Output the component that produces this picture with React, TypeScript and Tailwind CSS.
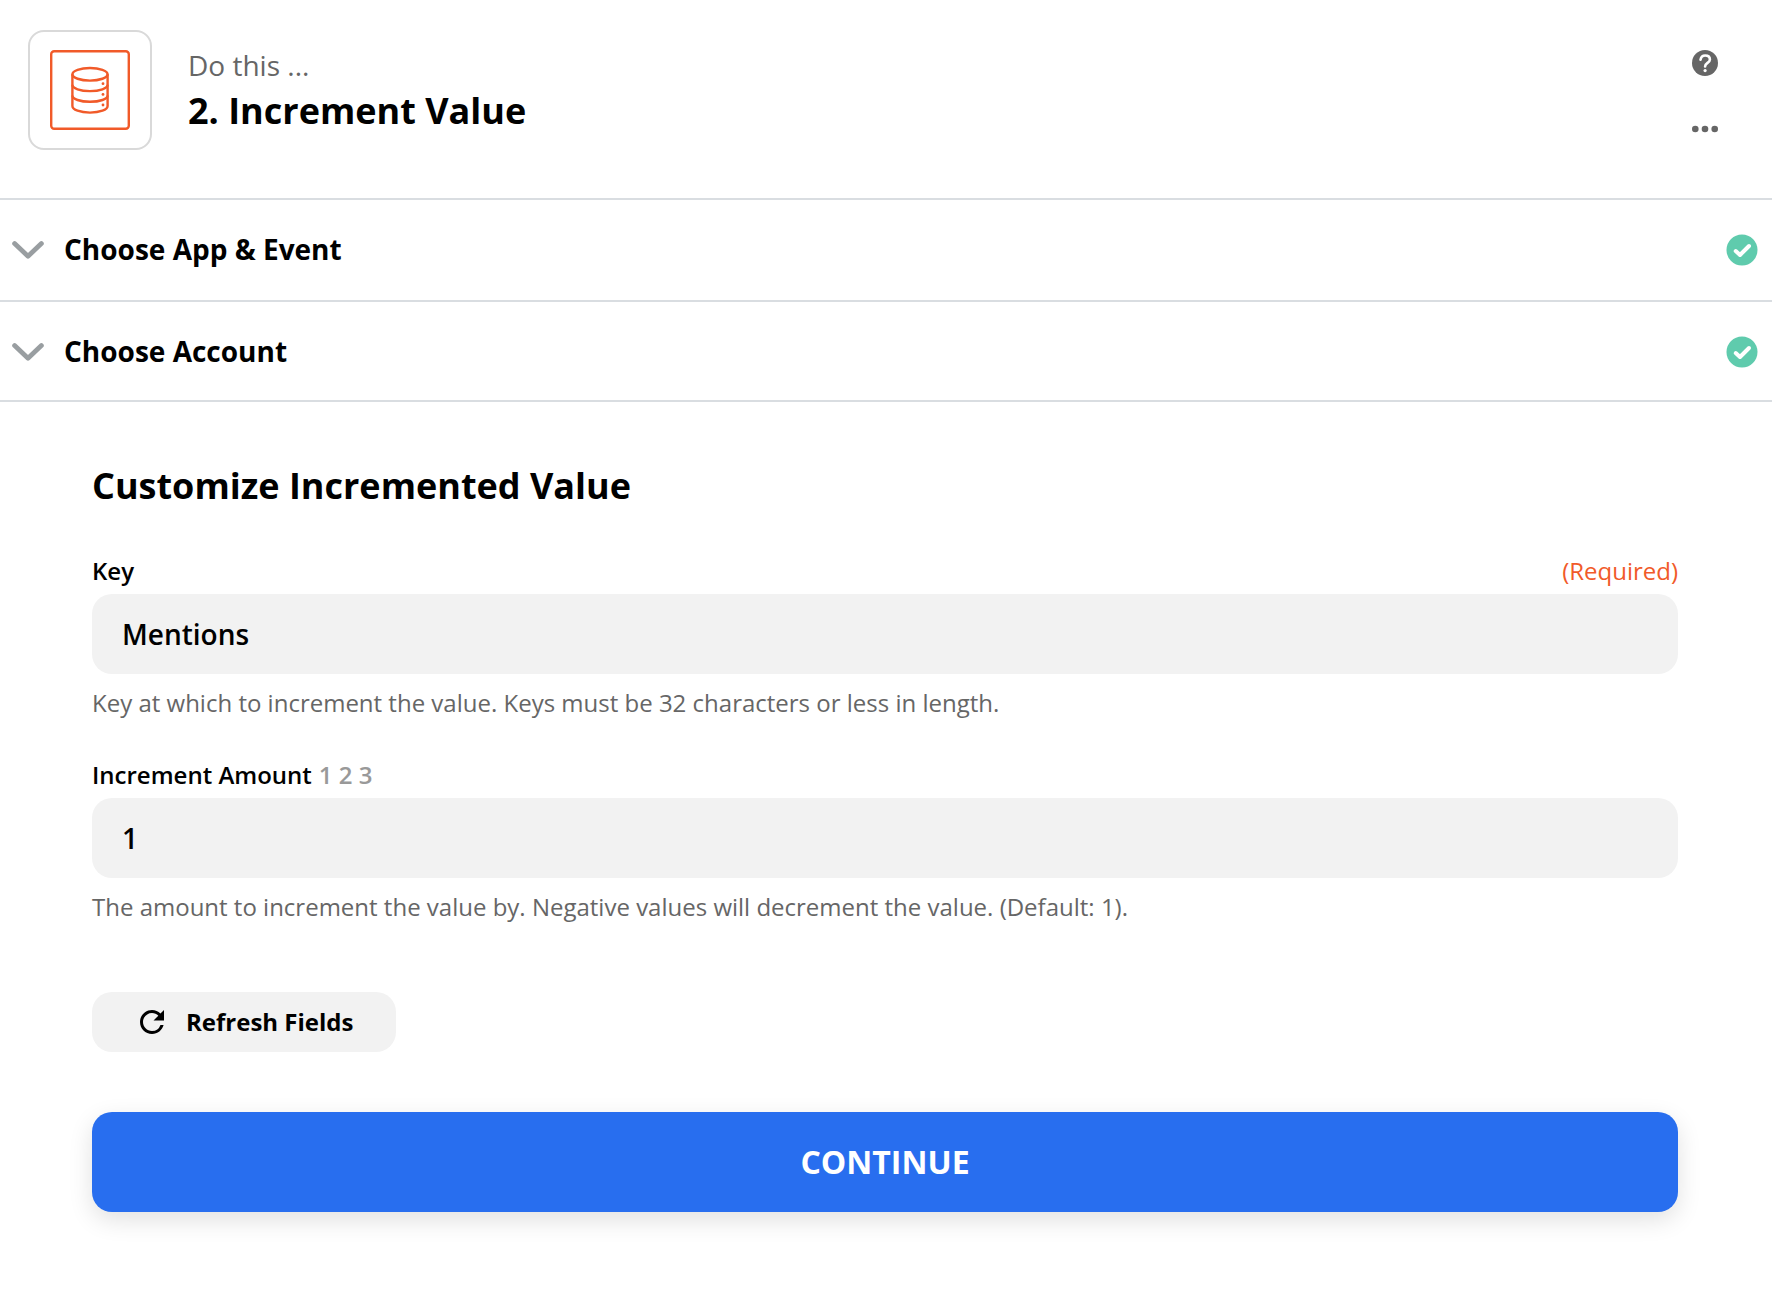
import React from "react";

const steps = [
  { id: 1, title: "Choose App & Event" },
  { id: 2, title: "Choose Account" },
];

const fields = [
  {
    id: "key",
    label: "Key",
    hint: "",
    required: true,
    value: "Mentions",
    help: "Key at which to increment the value. Keys must be 32 characters or less in length.",
  },
  {
    id: "amount",
    label: "Increment Amount",
    hint: "1 2 3",
    required: false,
    value: "1",
    help: "The amount to increment the value by. Negative values will decrement the value. (Default: 1).",
  },
];

function StorageIcon() {
  return (
    <svg width="80" height="80" viewBox="0 0 80 80" fill="none" stroke="#f15a29" strokeWidth="2.4">
      <rect x="1.2" y="1.2" width="77.6" height="77.6" rx="3" />
      <ellipse cx="40" cy="24.3" rx="17.6" ry="6.3" />
      <path d="M22.4 24.3v31.7c0 3.8 7.8 6.6 17.6 6.600s17.600-2.800 17.600-6.600v-31.700" />
      <path d="M22.400 34.800c0 3.600 7.800 6.300 17.600 6.300s17.600-2.700 17.600-6.300" />
      <path d="M22.400 45.500c0 3.600 7.800 6.300 17.600 6.300s17.600-2.700 17.600-6.300" />
      <g fill="#f15a29" stroke="none">
        <circle cx="53" cy="33.700" r="1.400" />
        <circle cx="53" cy="44.400" r="1.400" />
        <circle cx="53" cy="55" r="1.400" />
      </g>
    </svg>
  );
}

function HelpIcon() {
  return (
    <svg width="26" height="26" viewBox="0 0 26 26" fill="none">
      <circle cx="13" cy="13" r="13" fill="#666" />
      <path
        d="M8.500 9.800C9 7 10.800 5.500 13.200 5.500c2.800 0 4.700 1.600 4.700 3.900 0 3.500-4.800 3.400-4.800 7"
        stroke="#fff"
        strokeWidth="2.600"
        strokeLinecap="round"
      />
      <circle cx="13.100" cy="20.600" r="1.600" fill="#fff" />
    </svg>
  );
}

function DotsIcon() {
  return (
    <svg width="26" height="8" viewBox="0 0 26 8" fill="#666">
      <circle cx="3.300" cy="4" r="3.300" />
      <circle cx="13" cy="4" r="3.300" />
      <circle cx="22.700" cy="4" r="3.300" />
    </svg>
  );
}

function ChevronIcon() {
  return (
    <svg width="32" height="20" viewBox="0 0 32 20" fill="none">
      <path
        d="M2.600 3.600L16 16.200L29.400 3.600"
        stroke="#999ea1"
        strokeWidth="4.800"
        strokeLinecap="round"
        strokeLinejoin="round"
      />
    </svg>
  );
}

function CheckIcon() {
  return (
    <svg width="32" height="32" viewBox="0 0 32 32" fill="none">
      <circle cx="16" cy="16" r="15.500" fill="#5fcbad" />
      <path
        d="M9.700 17L14 21L23 12"
        stroke="#fff"
        strokeWidth="4"
        strokeLinecap="round"
        strokeLinejoin="round"
      />
    </svg>
  );
}

function RefreshIcon() {
  return (
    <svg width="36" height="36" viewBox="0 0 24 24">
      <path d="M17.65 6.35A7.958 7.958 0 0 0 12 4c-4.420 0-7.990 3.580-7.990 8s3.570 8 7.990 8c3.730 0 6.840-2.550 7.730-6h-2.080A5.990 5.990 0 0 1 12 18c-3.310 0-6-2.690-6-6s2.690-6 6-6c1.660 0 3.140.690 4.220 1.780L13 11h7V4l-2.350 2.350z" />
    </svg>
  );
}

function App() {
  return (
    <div className="bg-white text-black font-['Open_Sans',sans-serif]">
      <header className="flex items-start border-b-2 border-[#d9dde1] pt-[30px] pb-12 pl-7 pr-[54px]">
        <div className="rounded-[16px] border-2 border-[#d9d9d9] px-5 py-[18px]">
          <StorageIcon />
        </div>
        <div className="ml-9 mt-4 flex-1">
          <p className="text-[28px] leading-[38px] text-[#666]">Do this ...</p>
          <h1 className="mt-0.5 text-[36px] leading-[50px] font-bold">
            2. Increment Value
          </h1>
        </div>
        <div className="mt-5 flex flex-col gap-[49px]">
          <button type="button" aria-label="Help">
            <HelpIcon />
          </button>
          <button type="button" aria-label="More options">
            <DotsIcon />
          </button>
        </div>
      </header>

      {steps.map((step) => (
        <button
          key={step.id}
          type="button"
          className="flex w-full items-center gap-5 border-b-2 border-[#d9dde1] pt-[30px] pb-[30px] pl-3 pr-[14px] text-left last-of-type:pb-7"
        >
          <ChevronIcon />
          <span className="flex-1 pb-0.5 text-[28px] leading-[38px] font-bold">
            {step.title}
          </span>
          <CheckIcon />
        </button>
      ))}

      <main className="pt-[60px] pb-20 pl-[92px] pr-[94px]">
        <h2 className="mb-[45px] text-[36px] leading-[48px] font-bold">
          Customize Incremented Value
        </h2>

        <form>
          <div className="flex flex-col gap-10">
            {fields.map((field) => (
              <div key={field.id}>
                <div className="mb-[7px] flex justify-between text-[24px] leading-8">
                  <label htmlFor={field.id} className="font-semibold">
                    {field.label}
                    {field.hint && (
                      <span className="ml-[7px] text-[#999]">{field.hint}</span>
                    )}
                  </label>
                  {field.required && (
                    <span className="text-[#f15a29]">(Required)</span>
                  )}
                </div>
                <input
                  id={field.id}
                  type="text"
                  defaultValue={field.value}
                  className="block h-20 w-full rounded-[20px] bg-[#f2f2f2] px-[30px] text-[28px] font-semibold"
                />
                <p className="mt-[13px] text-[24px] leading-8 text-[#666]">
                  {field.help}
                </p>
              </div>
            ))}
          </div>

          <button
            type="button"
            className="mt-[69px] flex items-center gap-4 rounded-[20px] bg-[#f2f2f2] py-3 pl-[42px] pr-[43px] text-[24px] leading-9 font-bold"
          >
            <RefreshIcon />
            Refresh Fields
          </button>

          <button
            type="button"
            className="mt-[60px] h-[100px] w-full rounded-[20px] bg-[#286eef] text-[32px] font-bold text-white shadow-[0_8px_24px_rgba(0,0,0,0.12)]"
          >
            CONTINUE
          </button>
        </form>
      </main>
    </div>
  );
}

export default App;
